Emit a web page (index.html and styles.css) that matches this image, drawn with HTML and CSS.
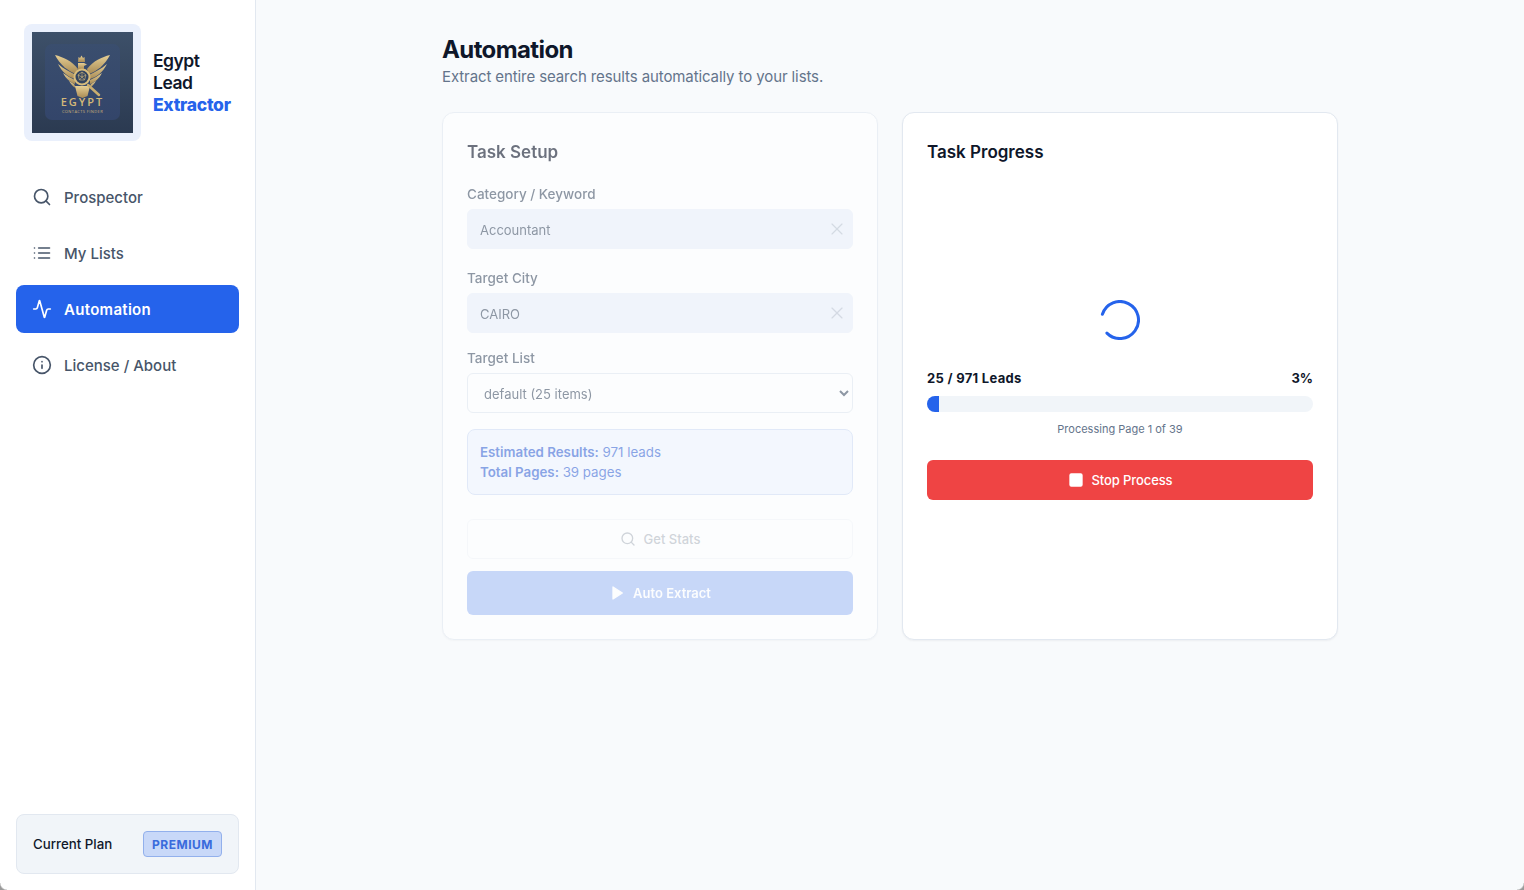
FILE: index.html
```html
<!DOCTYPE html>
<html>
<head>
    <title>Egypt Lead Extractor</title>
    <link rel="stylesheet" href="styles.css">
</head>
<body>
    <aside class="sidebar">
        <div class="brand">
            <div class="logo-box">
                <svg class="logo" viewBox="0 0 101 101">
                    <defs>
                        <linearGradient id="logo-bg" x1="0" y1="0" x2="0" y2="1">
                            <stop offset="0" stop-color="#3d5069"/>
                            <stop offset="1" stop-color="#2b3a51"/>
                        </linearGradient>
                        <linearGradient id="logo-card" x1="0" y1="0" x2="0" y2="1">
                            <stop offset="0" stop-color="#3a4e6e"/>
                            <stop offset="1" stop-color="#33456a"/>
                        </linearGradient>
                        <linearGradient id="gold" x1="0" y1="0" x2="0" y2="1">
                            <stop offset="0" stop-color="#e6cf94"/>
                            <stop offset="1" stop-color="#a88a54"/>
                        </linearGradient>
                        <g id="wing">
                            <path d="M23 23C31 25 40 29 46 37L44 42C36 39 28 33 23 23z"/>
                            <path d="M26 32C32 37 38 40 44 43L43 47C36 45 30 40 26 32z"/>
                            <path d="M31 41C35 44 39 46 43 48L43 52C38 50 34 47 31 41z"/>
                            <path d="M37 49L42 52L44 56C41 55 39 52 37 49z"/>
                        </g>
                    </defs>
                    <rect width="101" height="101" fill="url(#logo-bg)"/>
                    <rect x="13" y="12" width="75" height="76" rx="7" fill="url(#logo-card)"/>
                    <g fill="url(#gold)">
                        <use href="#wing"/>
                        <use href="#wing" transform="translate(101 0) scale(-1 1)"/>
                        <path d="M46 30l.5-5 1.5 1 1.500-2.500 1.500 2.500 1.500-1 .5 5z"/>
                        <path d="M46 31h6l3 1.500-3 1.500 0 3h-6z"/>
                        <path d="M43 54h15l-2.500 10-5 2-5-2z"/>
                    </g>
                    <path d="M56 53l11 10" stroke="#c9ad6f" stroke-width="2.500" stroke-linecap="round"/>
                    <circle cx="50" cy="45" r="7.500" fill="#33445f" stroke="#d9bd7c" stroke-width="2"/>
                    <path d="M46 43l4-3 4 3-1.500 5h-5zM50 40v5l-4-2m8 0-4 2 2.500 3m-5 0 2.500-3" fill="none" stroke="#d9bd7c" stroke-width=".6"/>
                    <text class="logo-name" x="50.500" y="73.500" text-anchor="middle">EGYPT</text>
                    <text class="logo-sub" x="50.500" y="81" text-anchor="middle">CONTACTS FINDER</text>
                </svg>
            </div>
            <div class="brand-name">
                <span>Egypt</span>
                <span>Lead</span>
                <span class="brand-accent">Extractor</span>
            </div>
        </div>

        <nav class="nav">
            <a class="nav-item">
                <svg class="icon" viewBox="0 0 24 24"><circle cx="11" cy="11" r="8"/><path d="m21 21-4.3-4.3"/></svg>
                Prospector
            </a>
            <a class="nav-item">
                <svg class="icon" viewBox="0 0 24 24"><path d="M3 12h.01"/><path d="M3 18h.01"/><path d="M3 6h.01"/><path d="M8 12h13"/><path d="M8 18h13"/><path d="M8 6h13"/></svg>
                My Lists
            </a>
            <a class="nav-item active">
                <svg class="icon" viewBox="0 0 24 24"><path d="M22 12h-2.48a2 2 0 0 0-1.93 1.46l-2.35 8.36a.25.25 0 0 1-.48 0L9.24 2.18a.25.25 0 0 0-.48 0l-2.35 8.36A2 2 0 0 1 4.49 12H2"/></svg>
                Automation
            </a>
            <a class="nav-item">
                <svg class="icon" viewBox="0 0 24 24"><circle cx="12" cy="12" r="10"/><path d="M12 16v-4"/><path d="M12 8h.01"/></svg>
                License / About
            </a>
        </nav>

        <div class="plan">
            <span class="plan-label">Current Plan</span>
            <span class="plan-badge">PREMIUM</span>
        </div>
    </aside>

    <main class="main">
        <div class="content">
            <h1 class="page-title">Automation</h1>
            <p class="page-sub">Extract entire search results automatically to your lists.</p>

            <div class="cards">
                <section class="card card-disabled">
                    <h2 class="card-title">Task Setup</h2>

                    <div class="field">
                        <label class="field-label">Category / Keyword</label>
                        <div class="input-wrap">
                            <input class="input" type="text" value="Accountant" disabled />
                            <svg class="input-clear" viewBox="0 0 24 24"><path d="M18 6 6 18"/><path d="m6 6 12 12"/></svg>
                        </div>
                    </div>

                    <div class="field field-city">
                        <label class="field-label">Target City</label>
                        <div class="input-wrap">
                            <input class="input" type="text" value="CAIRO" disabled />
                            <svg class="input-clear" viewBox="0 0 24 24"><path d="M18 6 6 18"/><path d="m6 6 12 12"/></svg>
                        </div>
                    </div>

                    <div class="field">
                        <label class="field-label">Target List</label>
                        <select class="select" disabled>
                            <option>default (25 items)</option>
                        </select>
                    </div>

                    <div class="stats-box">
                        <div><strong>Estimated Results:</strong> 971 leads</div>
                        <div><strong>Total Pages:</strong> 39 pages</div>
                    </div>

                    <button class="btn btn-outline" disabled>
                        <svg class="icon icon-sm" viewBox="0 0 24 24"><circle cx="11" cy="11" r="8"/><path d="m21 21-4.3-4.3"/></svg>
                        Get Stats
                    </button>
                    <button class="btn btn-primary" disabled>
                        <svg class="icon icon-sm icon-fill" viewBox="0 0 24 24"><polygon points="6 3 20 12 6 21 6 3"/></svg>
                        Auto Extract
                    </button>
                </section>

                <section class="card">
                    <h2 class="card-title">Task Progress</h2>

                    <div class="progress-body">
                        <svg class="spinner" viewBox="0 0 40 40"><path d="M2.4 14.3A18.5 18.5 0 1 1 6.9 33.1"/></svg>
                        <div class="progress-row">
                            <span class="progress-count">25 / 971 Leads</span>
                            <span>3%</span>
                        </div>
                        <div class="progress-track">
                            <div class="progress-fill" style="width: 3%"></div>
                        </div>
                        <p class="progress-note">Processing Page 1 of 39</p>
                        <button class="btn btn-danger">
                            <svg class="icon icon-sm icon-fill" viewBox="0 0 24 24"><rect x="3" y="3" width="18" height="18" rx="2"/></svg>
                            Stop Process
                        </button>
                    </div>
                </section>
            </div>
        </div>
    </main>
</body>
</html>
```

FILE: styles.css
```css
* { margin: 0; padding: 0; box-sizing: border-box; }
body { font-family: Inter, 'Noto Sans', sans-serif; background: #f8fafc; color: #0f172a; height: 100vh; display: flex; overflow: hidden; }

/* window corners at the bottom of the capture */
body::before, body::after { content: ''; position: fixed; bottom: 0; width: 7px; height: 7px; }
body::before { left: 0; background: radial-gradient(circle at 100% 0, transparent 6px, #9a9a9a 7.5px); }
body::after { right: 0; background: radial-gradient(circle at 0 0, transparent 6px, #9a9a9a 7.5px); }

.icon { width: 20px; height: 20px; fill: none; stroke: currentColor; stroke-width: 2; stroke-linecap: round; stroke-linejoin: round; flex-shrink: 0; }
.icon-sm { width: 16px; height: 16px; }
.icon-fill { fill: currentColor; }

/* sidebar */
.sidebar { width: 256px; flex-shrink: 0; background: #fff; border-right: 1px solid #e2e8f0; display: flex; flex-direction: column; }
.brand { display: flex; align-items: center; gap: 12px; padding: 24px 24px 32px; }
.logo-box { width: 117px; height: 117px; padding: 8px; background: #eaf0fc; border-radius: 8px; flex-shrink: 0; }
.logo { width: 101px; height: 101px; display: block; }
.logo-name { font-family: 'Open Sans', sans-serif; font-size: 11px; font-weight: 600; letter-spacing: 2px; fill: #d3b878; }
.logo-sub { font-family: 'Open Sans', sans-serif; font-size: 4px; letter-spacing: 0.4px; fill: #cbb27a; }
.brand-name { font-size: 17.5px; font-weight: 600; line-height: 22px; letter-spacing: -0.5px; display: flex; flex-direction: column; }
.brand-accent { color: #2563eb; font-weight: 800; letter-spacing: -0.3px; }

.nav { flex: 1; padding: 0 16px; display: flex; flex-direction: column; gap: 8px; }
.nav-item { height: 48px; display: flex; align-items: center; gap: 12px; padding: 0 16px; border-radius: 8px; font-size: 15px; font-weight: 500; color: #475569; }
.nav-item.active { background: #2563eb; color: #fff; font-weight: 600; letter-spacing: 0.3px; }

.plan { margin: 0 16px 16px; height: 60px; padding: 0 16px; display: flex; align-items: center; justify-content: space-between; background: #f1f5f9; border: 1px solid #e2e8f0; border-radius: 8px; }
.plan-label { font-size: 13.3px; font-weight: 500; color: #0f172a; }
.plan-badge { height: 26px; padding: 0 8px; display: flex; align-items: center; font-size: 12px; font-weight: 700; letter-spacing: 0.5px; color: #3a6bdc; background: #c8d8f8; border: 1px solid #92b0ec; border-radius: 4px; }

/* main */
.main { flex: 1; padding: 34px 24px 32px; overflow-y: auto; }
.content { max-width: 896px; margin: 0 auto; }
.page-title { font-size: 24px; font-weight: 700; line-height: 32px; letter-spacing: -0.6px; color: #0f172a; }
.page-sub { font-size: 15px; line-height: 22px; letter-spacing: -0.1px; color: #64748b; margin-bottom: 24px; }

.cards { display: grid; grid-template-columns: 1fr 1fr; gap: 24px; }
.card { background: #fff; border: 1px solid #e2e8f0; border-radius: 12px; padding: 24px; height: 528px; display: flex; flex-direction: column; box-shadow: 0 1px 2px rgba(15, 23, 42, 0.05); }
.card-disabled { opacity: 0.6; }
.card-title { font-size: 17px; font-weight: 600; line-height: 30px; margin-bottom: 18px; color: #0f172a; }

/* task setup */
.field { margin-bottom: 16px; }
.field-city { margin-top: 4px; }
.field-label { display: block; font-size: 13.5px; font-weight: 500; line-height: 19px; margin-bottom: 5px; color: #475569; }
.input-wrap { position: relative; }
.input { width: 100%; height: 40px; padding: 1px 32px 0 12px; border: 1px solid #ebf0fa; border-radius: 6px; background: #ebf0fa; font-family: inherit; font-size: 13px; color: #475569; }
.input-clear { position: absolute; top: 10px; right: 6px; width: 20px; height: 20px; fill: none; stroke: #bcc5d2; stroke-width: 1.4; stroke-linecap: round; }
.select { width: 100%; height: 40px; padding: 1px 12px 0; border: 1px solid #e2e8f0; border-radius: 6px; background: #fff; font-family: inherit; font-size: 13px; color: #475569; opacity: 1; }
.stats-box { padding: 12px; background: #f0f5ff; border: 1px solid #d2def5; border-radius: 8px; font-size: 13.3px; line-height: 20px; color: #3f6bd6; margin-bottom: 24px; }
.stats-box strong { font-weight: 600; }

.btn { width: 100%; height: 40px; display: flex; align-items: center; justify-content: center; gap: 8px; border-radius: 6px; font-family: inherit; font-size: 13px; font-weight: 500; cursor: pointer; border: 1px solid transparent; flex-shrink: 0; }
.btn-outline { background: #fff; border-color: #e2e8f0; color: #475569; opacity: 0.4; margin-bottom: 12px; }
.btn-primary { height: 44px; background: #2563eb; color: #fff; font-weight: 600; opacity: 0.4; }
.btn-danger { background: #ef4444; color: #fff; margin-top: 22px; letter-spacing: -0.1px; }

/* task progress */
.progress-body { flex: 1; display: flex; flex-direction: column; justify-content: center; }
.spinner { width: 40px; height: 40px; align-self: center; margin-bottom: 28px; fill: none; stroke: #2563eb; stroke-width: 3; stroke-linecap: round; }
.progress-row { display: flex; justify-content: space-between; font-size: 13px; font-weight: 700; line-height: 20px; margin-bottom: 8px; color: #0f172a; }
.progress-count { letter-spacing: 0.3px; }
.progress-track { height: 16px; background: #f1f5f9; border-radius: 8px; overflow: hidden; }
.progress-fill { height: 100%; background: #2563eb; }
.progress-note { font-size: 11px; line-height: 18px; margin-top: 8px; text-align: center; color: #64748b; }
```
